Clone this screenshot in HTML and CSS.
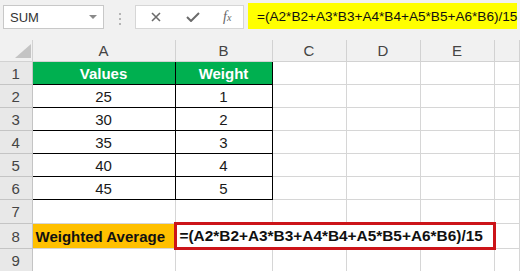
FILE: index.html
```html
<!DOCTYPE html>
<html lang="en">
<head>
    <meta charset="UTF-8">
    <title>Weighted Average</title>
    <link rel="stylesheet" href="styles.css">
</head>
<body>

    <div class="toolbar">
        <div class="namebox">
            <span>SUM</span>
            <span class="caret"></span>
        </div>
        <div class="grip"><i></i><i></i><i></i></div>
        <div class="fxbox">
            <svg class="icon" width="10" height="10" viewBox="0 0 10 10">
                <path d="M1 1 L9 9 M9 1 L1 9" stroke="#6b6b6b" stroke-width="1.6" fill="none"/>
            </svg>
            <svg class="icon" width="14" height="10" viewBox="0 0 14 10">
                <path d="M1 5 L5 9 L13 1" stroke="#6b6b6b" stroke-width="2" fill="none"/>
            </svg>
            <span class="fx">f<sub>x</sub></span>
        </div>
        <div class="formula">=(A2*B2+A3*B3+A4*B4+A5*B5+A6*B6)/15</div>
    </div>

    <table class="sheet">
        <colgroup>
            <col class="c-rh">
            <col class="c-a">
            <col class="c-b">
            <col class="c-n">
            <col class="c-n">
            <col class="c-n">
            <col>
        </colgroup>
        <tr class="heads">
            <th class="corner"><span class="tri"></span></th>
            <th>A</th><th>B</th><th>C</th><th>D</th><th>E</th><th></th>
        </tr>
        <tr>
            <td class="rh">1</td>
            <td class="box head">Values</td><td class="box head">Weight</td>
            <td></td><td></td><td></td><td></td>
        </tr>
        <tr>
            <td class="rh">2</td>
            <td class="box">25</td><td class="box">1</td>
            <td></td><td></td><td></td><td></td>
        </tr>
        <tr>
            <td class="rh">3</td>
            <td class="box">30</td><td class="box">2</td>
            <td></td><td></td><td></td><td></td>
        </tr>
        <tr>
            <td class="rh">4</td>
            <td class="box">35</td><td class="box">3</td>
            <td></td><td></td><td></td><td></td>
        </tr>
        <tr>
            <td class="rh">5</td>
            <td class="box">40</td><td class="box">4</td>
            <td></td><td></td><td></td><td></td>
        </tr>
        <tr>
            <td class="rh">6</td>
            <td class="box">45</td><td class="box">5</td>
            <td></td><td></td><td></td><td></td>
        </tr>
        <tr>
            <td class="rh">7</td>
            <td></td><td></td><td></td><td></td><td></td><td></td>
        </tr>
        <tr>
            <td class="rh">8</td>
            <td class="label">Weighted Average</td>
            <td class="result" colspan="4">=(A2*B2+A3*B3+A4*B4+A5*B5+A6*B6)/15</td>
            <td></td>
        </tr>
        <tr>
            <td class="rh">9</td>
            <td></td><td></td><td></td><td></td><td></td><td></td>
        </tr>
        <tr>
            <td class="rh"></td>
            <td></td><td></td><td></td><td></td><td></td><td></td>
        </tr>
    </table>

</body>
</html>
```

FILE: styles.css
```css
body {
    margin: 0;
    background: #fff;
    font-family: 'Liberation Sans', Arial, sans-serif;
    overflow: hidden;
}

.toolbar {
    display: flex;
    align-items: flex-start;
    height: 40px;
    padding-top: 3px;
    box-sizing: border-box;
    background: #f1f1f1;
}

.namebox {
    display: flex;
    align-items: center;
    justify-content: space-between;
    width: 101px;
    height: 24px;
    margin: 2px 0 0 3px;
    padding: 0 6px 0 6px;
    box-sizing: border-box;
    background: #fff;
    border: 1px solid #c8c8c8;
    font-size: 13px;
    color: #333;
}

.caret {
    width: 0;
    height: 0;
    border-left: 4px solid transparent;
    border-right: 4px solid transparent;
    border-top: 4px solid #8a8a8a;
}

.grip {
    display: flex;
    flex-direction: column;
    align-items: center;
    gap: 3px;
    width: 31px;
    padding-top: 10px;
}

.grip i {
    width: 2px;
    height: 2px;
    background: #b5b5b5;
}

.fxbox {
    display: flex;
    align-items: center;
    width: 109px;
    height: 24px;
    margin-top: 2px;
    padding-left: 15px;
    gap: 25px;
    box-sizing: border-box;
    background: #fff;
    border: 1px solid #d6d6d6;
}

.fx {
    font-family: 'Liberation Serif', serif;
    font-style: italic;
    font-size: 14px;
    color: #666;
    margin-left: -2px;
}

.fx sub {
    font-size: 10px;
    vertical-align: 0;
}

.formula {
    width: 269px;
    height: 26px;
    margin-left: 4px;
    padding-left: 9px;
    box-sizing: border-box;
    background: #ffff00;
    font-size: 13.6px;
    line-height: 27px;
    color: #111;
    white-space: nowrap;
}

.sheet {
    border-collapse: collapse;
    table-layout: fixed;
    width: 520px;
}

.c-rh { width: 32px; }
.c-a { width: 143px; }
.c-b { width: 97px; }
.c-n { width: 74px; }

.sheet th {
    height: 21px;
    padding: 0;
    background: #f1f1f1;
    border: 1px solid #d2d2d2;
    border-top: none;
    font-weight: normal;
    font-size: 15px;
    color: #444;
    text-align: center;
}

.sheet th.corner {
    position: relative;
    border-left: none;
}

.tri {
    position: absolute;
    right: 1px;
    bottom: 3px;
    width: 0;
    height: 0;
    border-left: 16px solid transparent;
    border-bottom: 14px solid #c4c4c4;
}

.sheet td {
    height: 22px;
    padding: 0 3px;
    border: 1px solid #d6d6d6;
    font-size: 15px;
    color: #1a1a1a;
    text-align: center;
    white-space: nowrap;
    overflow: hidden;
}

.sheet td.rh {
    padding: 0;
    background: #e8e8e8;
    border-color: #c4c4c4;
    border-left: none;
    color: #444;
}

.sheet td.box {
    border: 1px solid #000;
}

.sheet td.head {
    background: #00b050;
    color: #fff;
    font-weight: bold;
}

.sheet td.label {
    background: #ffc000;
    font-weight: bold;
    text-align: left;
    color: #111;
}

.sheet td.result {
    border: 3px solid #cc1419;
    font-weight: bold;
    font-size: 15.4px;
    text-align: left;
    color: #111;
}
```
